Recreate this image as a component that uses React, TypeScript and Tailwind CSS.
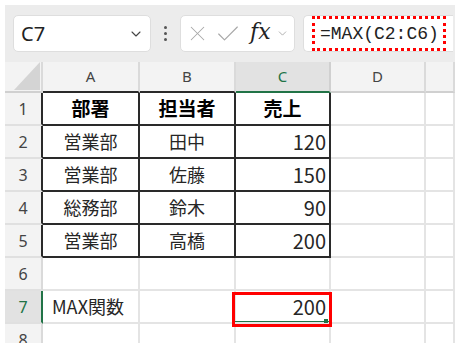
import React from 'react';
import { ChevronDown, X, Check } from 'lucide-react';

const rows = [
  { n: '1', a: '部署', b: '担当者', c: '売上' },
  { n: '2', a: '営業部', b: '田中', c: '120' },
  { n: '3', a: '営業部', b: '佐藤', c: '150' },
  { n: '4', a: '総務部', b: '鈴木', c: '90' },
  { n: '5', a: '営業部', b: '高橋', c: '200' },
  { n: '6', a: '', b: '', c: '' },
  { n: '7', a: 'MAX関数', b: '', c: '200' },
  { n: '8', a: '', b: '', c: '' },
];

function Toolbar() {
  return (
    <div className="h-[57px] bg-[#ececec] flex items-start pt-[10px] pl-[8px] pr-[2px] font-['Noto_Sans',sans-serif]">
      <div className="w-[138px] h-[37px] bg-white rounded-[5px] border border-[#dedede] flex items-center pl-[7px] pr-[6px]">
        <span className="flex-1 text-[20px] text-[#222] leading-none">C7</span>
        <ChevronDown size={16} strokeWidth={1.6} className="text-[#444]" />
      </div>
      <div className="w-[29px] h-[37px] flex flex-col items-center justify-center gap-[3px]">
        <span className="w-[3px] h-[3px] bg-[#555] rounded-full" />
        <span className="w-[3px] h-[3px] bg-[#555] rounded-full" />
        <span className="w-[3px] h-[3px] bg-[#555] rounded-full" />
      </div>
      <div className="w-[115px] h-[37px] bg-white rounded-[5px] border border-[#dedede] flex items-center pl-[4px]">
        <X size={25} strokeWidth={1} className="text-[#a8a8a8]" />
        <Check size={28} strokeWidth={1} className="text-[#a8a8a8] ml-[4px]" />
        <span className="ml-[8px] font-['DejaVu_Serif',serif] italic text-[22px] text-[#222] leading-none pb-[3px]">fx</span>
        <ChevronDown size={13} strokeWidth={1.4} className="text-[#999] ml-[5px]" />
      </div>
      <div className="ml-[8px] flex-1 h-[37px] bg-white rounded-l-[5px] border border-r-0 border-[#dedede] pl-[8px]">
        <div className="h-full w-[134px] border-[3px] border-dotted border-[#ff0000] flex items-center pl-[5px]">
          <span className="font-['Liberation_Mono',monospace] text-[18px] text-[#222] leading-none">=MAX(C2:C6)</span>
        </div>
      </div>
    </div>
  );
}

function Grid() {
  return (
    <div className="grid grid-cols-[38px_97px_96px_95px_95px_29px] grid-rows-[31px_repeat(8,33px)] font-['Noto_Sans_CJK_JP',sans-serif] text-[#262626]">
      <div className="bg-[#f3f3f3] border-r-2 border-r-[#dadada] border-b-2 border-b-[#d0d0d0] flex items-end justify-end pr-[1px] pb-[1px]">
        <svg width="26" height="28" viewBox="0 0 26 28">
          <polygon points="26,0 26,28 0,28" fill="#d4d4d4" />
        </svg>
      </div>
      <div className="bg-[#f3f3f3] border-r-2 border-r-[#dadada] border-b-2 border-b-[#2a2a2a] flex items-center justify-center font-['Noto_Sans',sans-serif] text-[15px] text-[#444]">A</div>
      <div className="bg-[#f3f3f3] border-r-2 border-r-[#dadada] border-b-2 border-b-[#2a2a2a] flex items-center justify-center font-['Noto_Sans',sans-serif] text-[15px] text-[#444]">B</div>
      <div className="bg-[#e2e2e2] border-r-2 border-r-[#d0d0d0] border-b-2 border-b-[#217346] flex items-center justify-center font-['Noto_Sans',sans-serif] text-[15px] text-[#217346]">C</div>
      <div className="bg-[#f3f3f3] border-r-2 border-r-[#dadada] border-b-2 border-b-[#d0d0d0] flex items-center justify-center font-['Noto_Sans',sans-serif] text-[15px] text-[#444]">D</div>
      <div className="bg-[#f3f3f3] border-r-2 border-r-[#dadada] border-b-2 border-b-[#d0d0d0]" />

      {rows.map((r, i) => {
        const idx = i + 1;
        const inTable = idx <= 5;
        const head = idx === 1;
        const body = inTable
          ? 'border-r-2 border-b-2 border-[#2a2a2a]'
          : 'border-r-2 border-b-2 border-[#e4e4e4]';
        return (
          <React.Fragment key={r.n}>
            <div
              className={
                idx === 7
                  ? 'bg-[#e2e2e2] border-r-2 border-r-[#217346] border-b-2 border-b-[#e0e0e0] flex items-center justify-center font-["Noto_Sans",sans-serif] text-[16px] text-[#217346]'
                  : inTable
                  ? 'bg-[#f3f3f3] border-r-2 border-r-[#2a2a2a] border-b-2 border-b-[#e0e0e0] flex items-center justify-center font-["Noto_Sans",sans-serif] text-[16px] text-[#444]'
                  : 'bg-[#f3f3f3] border-r-2 border-r-[#dadada] border-b-2 border-b-[#e0e0e0] flex items-center justify-center font-["Noto_Sans",sans-serif] text-[16px] text-[#444]'
              }
            >
              {r.n}
            </div>
            <div
              className={`${body} flex items-center ${
                idx === 7 ? 'justify-start pl-[9px] text-[18px]' : 'justify-center'
              } ${head ? 'font-bold text-[19px] text-black' : 'text-[18px]'}`}
            >
              {r.a}
            </div>
            <div
              className={`${body} flex items-center justify-center ${
                head ? 'font-bold text-[19px] text-black' : 'text-[18px]'
              }`}
            >
              {r.b}
            </div>
            <div
              className={`${body} relative flex items-center ${
                head ? 'justify-center font-bold text-[19px] text-black' : 'justify-end pr-[3px] text-[20px]'
              }`}
            >
              {r.c}
              {idx === 7 && (
                <div className="absolute -left-[4px] -right-[3px] top-[1px] -bottom-[5px] border-[3px] border-[#ff0000] z-10">
                  <div className="absolute left-0 right-0 bottom-[2px] h-[1px] bg-[#217346]" />
                  <div className="absolute right-[1px] bottom-[1px] w-[4px] h-[4px] bg-[#217346]" />
                </div>
              )}
            </div>
            <div className="border-r-2 border-b-2 border-[#e4e4e4]" />
            <div className="border-r-2 border-b-2 border-[#e4e4e4]" />
          </React.Fragment>
        );
      })}
    </div>
  );
}

export default function App() {
  return (
    <div className="w-[465px] h-[349px] bg-white p-[5px]">
      <div className="w-[450px] h-[338px] overflow-hidden">
        <Toolbar />
        <Grid />
      </div>
    </div>
  );
}
